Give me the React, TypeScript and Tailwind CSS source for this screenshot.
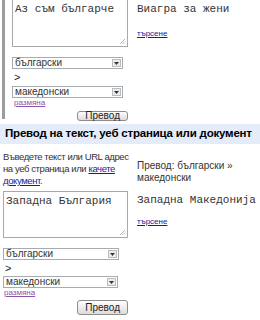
const sans = 'font-["Liberation_Sans",Arial,sans-serif]'
const mono = 'font-["Liberation_Mono","Courier_New",monospace]'

function Grip() {
  return (
    <svg width="7" height="7" viewBox="0 0 7 7" className="absolute right-[1px] bottom-[1px]">
      <path d="M6 1L1 6M6 3.5L3.5 6" stroke="#b5b5b5" strokeWidth="1" />
    </svg>
  )
}

function Area({ text, noTop }: { text: string; noTop?: boolean }) {
  return (
    <div
      className={`relative h-[47px] border border-[#a9a9a9] bg-white px-[2px] pt-[3px] text-[11px] leading-[13px] text-[#333] ${mono} ${noTop ? 'border-t-0' : ''}`}
    >
      {text}
      <Grip />
    </div>
  )
}

function Sel({ label, className }: { label: string; className: string }) {
  return (
    <div className={`flex h-[12px] items-center justify-between border border-[#a5acb2] bg-white ${className}`}>
      <span className={`pl-[2px] text-[10px] leading-none text-[#333] ${sans}`}>{label}</span>
      <span className="mr-[1px] flex h-[8px] w-[9px] items-center justify-center border border-[#bcbcbc] bg-[#ececec]">
        <svg width="5" height="3" viewBox="0 0 5 3">
          <path d="M0 0H5L2.5 3Z" fill="#333" />
        </svg>
      </span>
    </div>
  )
}

function Btn({ className }: { className: string }) {
  return (
    <div className="flex justify-end">
      <div
        className={`flex items-center rounded-[3px] border border-[#8d8d8d] bg-gradient-to-b from-white to-[#dcdcdc] px-[7px] text-[10px] leading-none text-[#222] ${sans} ${className}`}
      >
        Превод
      </div>
    </div>
  )
}

function Result({ text, gap }: { text: string; gap: string }) {
  return (
    <div className="flex flex-col">
      <div className={`text-[11px] leading-[13px] text-[#333] whitespace-nowrap ${mono}`}>{text}</div>
      <a className={`${gap} text-[8px] leading-[10px] text-[#1a1a9c] underline ${sans}`}>търсене</a>
    </div>
  )
}

export default function App() {
  return (
    <div className={`h-[320px] w-[260px] overflow-hidden bg-white ${sans}`}>
      <div className="flex items-start">
        <div className="ml-[2px] h-[119px] w-[3px] bg-[#9c9c9c]" />
        <div className="ml-[7px] w-[116px]">
          <Area text="Аз съм българче" noTop />
          <Sel label="български" className="mt-[10px] w-[111px]" />
          <div className="h-[17px] pl-[2px] pt-[2px] text-[11px] leading-[13px] text-[#222]">&gt;</div>
          <Sel label="македонски" className="w-[111px]" />
          <a className="block h-[9px] pl-[2px] text-[8px] leading-[9px] text-[#8855aa] underline">размяна</a>
          <Btn className="mt-[4px] h-[10px]" />
        </div>
        <div className="ml-[9px] pt-[3px]">
          <Result text="Виагра за жени" gap="mt-[13px]" />
        </div>
      </div>

      <div className="mt-[3px] flex h-[20px] items-center bg-[#e5ecf9] pl-[5px] text-[11.5px] font-bold tracking-[-0.2px] text-black whitespace-nowrap">
        Превод на текст, уеб страница или документ
      </div>

      <div className="flex pl-[3px]">
        <div className="w-[125px]">
          <p className="h-[43px] pt-[7px] text-[9.5px] leading-[12px] tracking-[-0.4px] text-[#333] whitespace-nowrap">
            Въведете текст или URL адрес
            <br />
            на уеб страница или <a className="text-[#1a1a9c] underline">качете</a>
            <br />
            <a className="text-[#1a1a9c] underline">документ</a>.
          </p>
          <div className="mt-[4px]">
            <Area text="Западна България" />
          </div>
          <Sel label="български" className="mt-[10px] w-[116px]" />
          <div className="h-[16px] pl-[2px] pt-[2px] text-[11px] leading-[13px] text-[#222]">&gt;</div>
          <Sel label="македонски" className="w-[115px]" />
          <a className="block h-[9px] pl-[1px] text-[8px] leading-[9px] text-[#8855aa] underline">размяна</a>
          <Btn className="mt-[3px] h-[15px]" />
        </div>
        <div className="ml-[9px] flex flex-col">
          <p className="pt-[16px] text-[10px] leading-[12px] text-[#333]">
            Превод: български »<br />
            македонски
          </p>
          <div className="mt-[10px]">
            <Result text="Западна Македонија" gap="mt-[10px]" />
          </div>
        </div>
      </div>
    </div>
  )
}
